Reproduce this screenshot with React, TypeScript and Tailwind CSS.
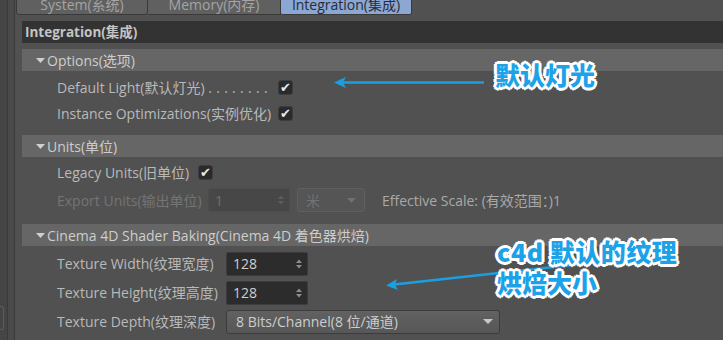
import React from "react";

const ui = "font-['Open_Sans','Noto_Sans_CJK_SC',sans-serif]";

function Check() {
  return (
    <div className="w-[15px] h-[15px] rounded-[3px] bg-[#2a2a2a] border border-[#3d3d3d] flex items-center justify-center text-[#e6e6e6] text-[13px] leading-none font-['DejaVu_Sans',sans-serif]">
      ✔
    </div>
  );
}

function Spinner({ dim }: { dim?: boolean }) {
  const c = dim ? "#5e5e5e" : "#8c8c8c";
  return (
    <svg width="6" height="10" viewBox="0 0 6 10">
      <path d="M0 4 L3 0.5 L6 4 Z" fill={c} />
      <path d="M0 6 L3 9.5 L6 6 Z" fill={c} />
    </svg>
  );
}

function NumInput({ value, dim }: { value: string; dim?: boolean }) {
  return (
    <div
      className={
        "w-[82px] h-[24px] rounded-[2px] flex items-center justify-between pl-[6px] pr-[5px] text-[14px] " +
        (dim
          ? "bg-[#474747] border border-[#4c4c4c] text-[#707070]"
          : "bg-[#2c2c2c] border border-[#3c3c3c] text-[#cfcfcf]")
      }
    >
      <span>{value}</span>
      <Spinner dim={dim} />
    </div>
  );
}

function Section({ title, children, pt }: { title: string; children: React.ReactNode; pt: string }) {
  return (
    <div className="flex flex-col">
      <div className="h-[22px] bg-[#666666] flex items-center pl-[14px] text-[#cdcdcd] text-[14px]">
        <svg width="9" height="5" viewBox="0 0 9 5" className="mr-[2px]">
          <path d="M0 0 L9 0 L4.5 5 Z" fill="#d0d0d0" />
        </svg>
        <span>{title}</span>
      </div>
      <div className={"flex flex-col pl-[35px] pb-[9px] " + pt}>{children}</div>
    </div>
  );
}

const outline =
  "[text-shadow:2px_0_0_#fff,-2px_0_0_#fff,0_2px_0_#fff,0_-2px_0_#fff,2px_2px_0_#fff,-2px_-2px_0_#fff,2px_-2px_0_#fff,-2px_2px_0_#fff,3px_0_0_#fff,-3px_0_0_#fff,0_3px_0_#fff,0_-3px_0_#fff]";

export default function App() {
  return (
    <div className={"relative w-[723px] h-[340px] overflow-hidden bg-[#515151] flex " + ui}>
      {/* left gutter */}
      <div className="w-[8px] h-full bg-[#454545] border-r border-[#3a3a3a] flex flex-col justify-end pb-[10px]">
        <div className="h-[24px] w-[4px] rounded-r-[3px] border border-l-0 border-[#5c5c5c]" />
      </div>
      <div className="w-[7px] h-full bg-[#4a4a4a] border-r border-[#3b3b3b]" />

      {/* main */}
      <div className="flex-1 flex flex-col pl-[1px]">
        {/* tabs */}
        <div className="flex h-[22px] -mt-[7px] text-[14px]">
          <div className="w-[132px] h-full bg-[#606060] border border-[#3a3a3a] rounded-b-[3px] flex items-center justify-center text-[#a4a4a4]">
            System(系统)
          </div>
          <div className="w-[133px] h-full bg-[#606060] border border-l-0 border-[#3a3a3a] flex items-center justify-center text-[#a4a4a4]">
            Memory(内存)
          </div>
          <div className="w-[131px] h-full bg-[#8ca7d2] border border-l-0 border-[#3a3a3a] rounded-b-[2px] flex items-center justify-center text-[#262c38]">
            Integration(集成)
          </div>
        </div>

        <div className="flex flex-col pl-[6px] pt-[6px]">
          <div className="h-[22px] bg-[#333333] flex items-center pl-[3px] text-[#c4c4c4] text-[13.5px] font-bold">
            Integration(集成)
          </div>
          <div className="h-[6px]" />

          <Section title="Options(选项)" pt="pt-[3px]">
            <div className="h-[26px] flex items-center">
              <div className="w-[221px] whitespace-nowrap text-[14px] text-[#b9b9b9]">
                Default Light(默认灯光) <span className="tracking-[4.3px]">........</span>
              </div>
              <Check />
            </div>
            <div className="h-[26px] flex items-center">
              <div className="w-[221px] whitespace-nowrap text-[14px] text-[#b9b9b9]">Instance Optimizations(实例优化)</div>
              <Check />
            </div>
          </Section>

          <Section title="Units(单位)" pt="pt-[2px]">
            <div className="h-[26px] flex items-center">
              <div className="w-[141px] whitespace-nowrap text-[14px] text-[#b9b9b9]">Legacy Units(旧单位)</div>
              <Check />
            </div>
            <div className="h-[30px] flex items-center">
              <div className="w-[151px] whitespace-nowrap text-[14px] text-[#747474]">Export Units(输出单位)</div>
              <NumInput value="1" dim />
              <div className="ml-[7px] w-[68px] h-[24px] rounded-[3px] bg-[#555555] border border-[#5f5f5f] flex items-center justify-between pl-[8px] pr-[8px] text-[14px] text-[#737373]">
                <span>米</span>
                <svg width="9" height="5" viewBox="0 0 9 5">
                  <path d="M0 0 L9 0 L4.5 5 Z" fill="#6f6f6f" />
                </svg>
              </div>
              <div className="ml-[17px] whitespace-nowrap text-[14px] text-[#a9a9a9]">Effective Scale: (有效范围：)1</div>
            </div>
          </Section>

          <Section title="Cinema 4D Shader Baking(Cinema 4D 着色器烘焙)" pt="pt-[3px]">
            <div className="h-[29px] flex items-center">
              <div className="w-[169px] whitespace-nowrap text-[14px] text-[#b9b9b9]">Texture Width(纹理宽度)</div>
              <NumInput value="128" />
            </div>
            <div className="h-[29px] flex items-center">
              <div className="w-[169px] whitespace-nowrap text-[14px] text-[#b9b9b9]">Texture Height(纹理高度)</div>
              <NumInput value="128" />
            </div>
            <div className="h-[29px] flex items-center">
              <div className="w-[169px] whitespace-nowrap text-[14px] text-[#b9b9b9]">Texture Depth(纹理深度)</div>
              <div className="w-[274px] h-[24px] rounded-[3px] bg-gradient-to-b from-[#616161] to-[#575757] border border-[#3c3c3c] flex items-center justify-between pl-[9px] pr-[6px] text-[14px] text-[#cdcdcd]">
                <span>8 Bits/Channel(8 位/通道)</span>
                <svg width="10" height="5" viewBox="0 0 10 5">
                  <path d="M0 0 L10 0 L5 5 Z" fill="#c8c8c8" />
                </svg>
              </div>
            </div>
          </Section>
        </div>
      </div>

      {/* annotation arrows */}
      <svg className="absolute inset-0 pointer-events-none" width="723" height="340" viewBox="0 0 723 340">
        <line x1="484" y1="82.5" x2="342" y2="82.5" stroke="#1a9fe2" strokeWidth="2.5" />
        <path d="M334 82.5 L346 77 L343 82.5 L346 88 Z" fill="#1a9fe2" />
        <line x1="600" y1="262" x2="394" y2="284.5" stroke="#1a9fe2" strokeWidth="2.5" />
        <path d="M386 285.5 L397 279 L395 284.5 L398 290 Z" fill="#1a9fe2" />
      </svg>

      {/* annotation texts */}
      <div
        className={
          "absolute left-[495px] top-[59px] text-[25px] leading-[31px] font-black text-[#1da2e8] font-['Noto_Sans_CJK_SC',sans-serif] whitespace-nowrap " +
          outline
        }
      >
        默认灯光
      </div>
      <div
        className={
          "absolute left-[497px] top-[236px] text-[25px] leading-[31px] font-black text-[#1da2e8] font-['Noto_Sans_CJK_SC',sans-serif] whitespace-nowrap " +
          outline
        }
      >
        <div className="tracking-[0.5px]">c4d 默认的纹理</div>
        <div>烘焙大小</div>
      </div>
    </div>
  );
}
